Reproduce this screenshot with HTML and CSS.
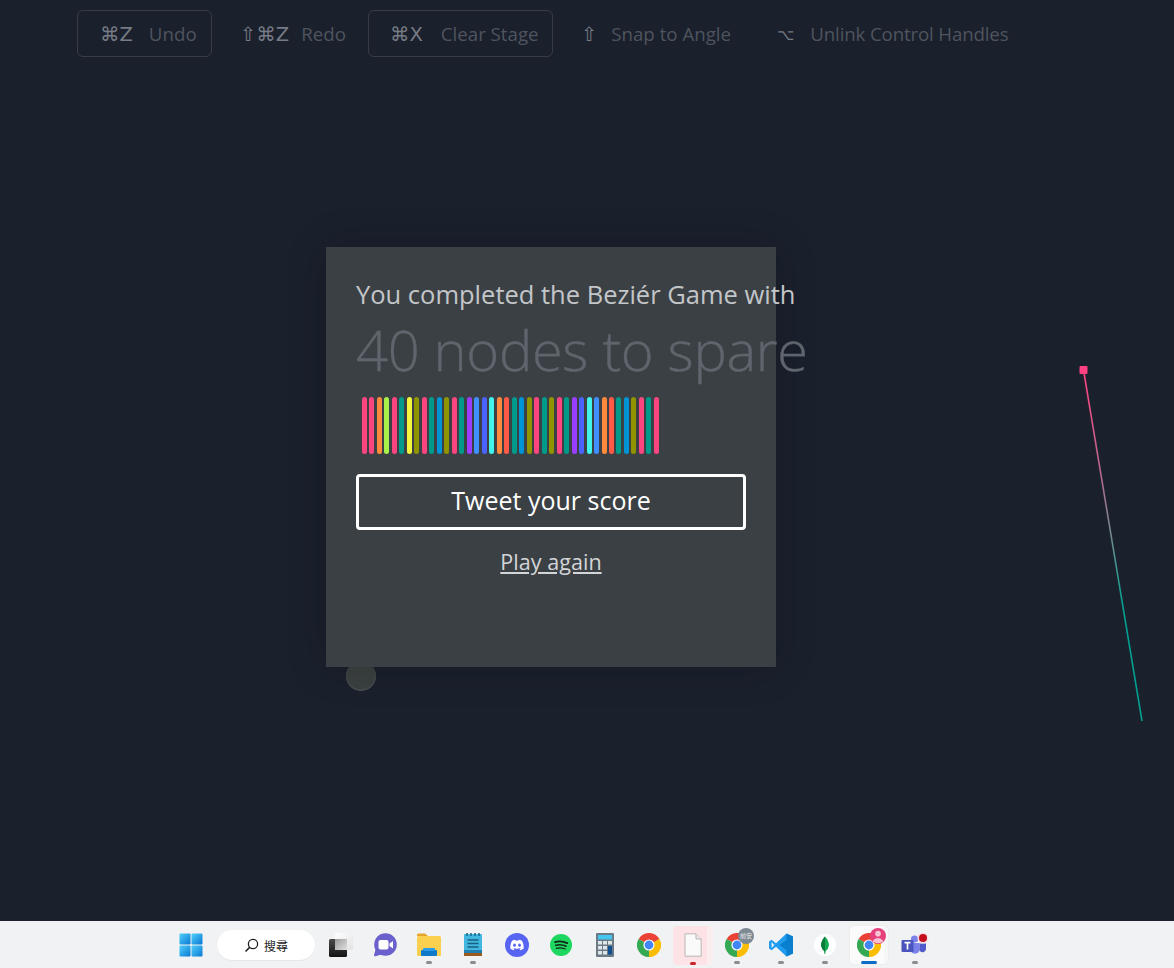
FILE: index.html
```html
<!DOCTYPE html>
<html lang="en">
<head>
    <meta charset="UTF-8">
    <meta name="viewport" content="width=device-width, initial-scale=1.0">
    <title>The Bezier Game</title>
    <link rel="stylesheet" href="styles.css">
</head>
<body>
    <div class="stage">
        <div class="toolbar">
            <div class="tool boxed tool-undo"><span class="keys">⌘Z</span><span class="label">Undo</span></div>
            <div class="tool tool-redo"><span class="keys">⇧⌘Z</span><span class="label">Redo</span></div>
            <div class="tool boxed tool-clear"><span class="keys">⌘X</span><span class="label">Clear Stage</span></div>
            <div class="tool tool-snap"><span class="keys">⇧</span><span class="label">Snap to Angle</span></div>
            <div class="tool tool-unlink"><span class="keys keys-small">⌥</span><span class="label">Unlink Control Handles</span></div>
        </div>

        <svg class="handle" width="80" height="370" viewBox="0 0 80 370">
            <defs>
                <linearGradient id="handleLine" x1="0" y1="0" x2="0" y2="1">
                    <stop offset="0" stop-color="#ff4081"/>
                    <stop offset="0.3" stop-color="#b36a8c"/>
                    <stop offset="0.48" stop-color="#6b8a8a"/>
                    <stop offset="0.68" stop-color="#00a090"/>
                    <stop offset="1" stop-color="#00a090"/>
                </linearGradient>
            </defs>
            <path d="M13.5 10 L72 361" stroke="url(#handleLine)" stroke-width="1.6" fill="none"/>
            <rect x="9.5" y="6" width="8" height="8" rx="1" fill="#ff4081"/>
        </svg>

        <div class="node"></div>

        <div class="modal">
            <p class="modal-lead">You completed the Beziér Game with</p>
            <h1 class="modal-score">40 nodes to spare</h1>
            <div class="bars">
                <span class="pink"></span><span class="pink"></span><span class="orange"></span><span class="lime"></span><span class="pink"></span>
                <span class="teal"></span><span class="yellow"></span><span class="olive"></span><span class="pink"></span><span class="teal"></span>
                <span class="blue"></span><span class="olive"></span><span class="pink"></span><span class="teal"></span><span class="purple"></span>
                <span class="sky"></span><span class="indigo"></span><span class="cyan"></span><span class="orange"></span><span class="red"></span>
                <span class="teal"></span><span class="blue"></span><span class="olive"></span><span class="pink"></span><span class="teal"></span>
                <span class="olive"></span><span class="pink"></span><span class="teal"></span><span class="purple"></span><span class="indigo"></span>
                <span class="cyan"></span><span class="sky"></span><span class="orange"></span><span class="red"></span><span class="teal"></span>
                <span class="blue"></span><span class="olive"></span><span class="pink"></span><span class="teal"></span><span class="pink"></span>
            </div>
            <a class="tweet" href="#">Tweet your score</a>
            <a class="again" href="#">Play again</a>
        </div>
    </div>

    <div class="taskbar">
        <svg class="tb-icon tb-start" width="24" height="24" viewBox="0 0 24 24">
            <defs>
                <linearGradient id="winBlue" x1="0" y1="0" x2="1" y2="1">
                    <stop offset="0" stop-color="#4fd0fb"/>
                    <stop offset="1" stop-color="#0a78d4"/>
                </linearGradient>
                <linearGradient id="viewsBack" x1="0" y1="0" x2="1" y2="1">
                    <stop offset="0" stop-color="#ffffff"/>
                    <stop offset="1" stop-color="#e2e2e2"/>
                </linearGradient>
                <linearGradient id="viewsFront" x1="0" y1="0" x2="0" y2="1">
                    <stop offset="0" stop-color="#4a4a4a"/>
                    <stop offset="1" stop-color="#141414"/>
                </linearGradient>
                <linearGradient id="viewsMid" x1="0" y1="0" x2="1" y2="1">
                    <stop offset="0" stop-color="#9a9a9a"/>
                    <stop offset="1" stop-color="#e0e0e0"/>
                </linearGradient>
            </defs>
            <rect x="0.5" y="0.5" width="11" height="11" rx="1" fill="url(#winBlue)"/>
            <rect x="12.5" y="0.5" width="11" height="11" rx="1" fill="url(#winBlue)"/>
            <rect x="0.5" y="12.5" width="11" height="11" rx="1" fill="url(#winBlue)"/>
            <rect x="12.5" y="12.5" width="11" height="11" rx="1" fill="url(#winBlue)"/>
        </svg>

        <div class="tb-search">
            <svg width="15" height="15" viewBox="0 0 15 15"><circle cx="9" cy="6" r="4.6" fill="none" stroke="#222" stroke-width="1.3"/><path d="M5.6 9.4 L1.5 13.5" stroke="#222" stroke-width="1.5"/></svg>
            <span>搜尋</span>
        </div>

        <svg class="tb-icon tb-views" width="24" height="24" viewBox="0 0 24 24">
            <rect x="6" y="0" width="18" height="17" rx="1.5" fill="url(#viewsBack)"/>
            <rect x="0" y="6" width="18" height="18" rx="1.5" fill="url(#viewsFront)"/>
            <rect x="6" y="6" width="12" height="11" fill="url(#viewsMid)"/>
        </svg>

        <svg class="tb-icon tb-chat" width="24" height="24" viewBox="0 0 24 24">
            <circle cx="12.5" cy="11.5" r="11.3" fill="#6b60cc"/>
            <path d="M3 15 L1 22 Q0.8 23.6 2.5 23.2 L10 21 Z" fill="#6b60cc"/>
            <rect x="5.5" y="7" width="10" height="9.5" rx="2" fill="#fff"/>
            <path d="M16.5 10.6 L20 8 V15.6 L16.5 13 Z" fill="#fff"/>
        </svg>

        <div class="tb-item tb-files">
            <svg width="24" height="24" viewBox="0 0 24 24">
                <path d="M0 2 Q0 0.5 1.5 0.5 H8 L11 3 H0 Z" fill="#e5a52a"/>
                <rect x="0" y="3" width="24" height="20" rx="1.5" fill="#fbd04e"/>
                <rect x="4" y="17" width="16" height="6" rx="1" fill="#0f78c9"/>
                <rect x="6" y="15" width="12" height="3" rx="1" fill="#2a9ce3"/>
            </svg>
            <i class="pip"></i>
        </div>

        <div class="tb-item tb-notes">
            <svg width="18" height="24" viewBox="0 0 18 24">
                <rect x="0" y="1" width="18" height="21" rx="1" fill="#41b7e0"/>
                <rect x="0" y="20" width="18" height="3" fill="#9a5a1e"/>
                <rect x="0" y="17" width="18" height="3" fill="#1f7fae"/>
                <path d="M3 0 V3 M7 0 V3 M11 0 V3 M15 0 V3" stroke="#14668f" stroke-width="1.5"/>
                <path d="M3.5 7 H14.5 M3.5 10.5 H14.5 M3.5 14 H14.5" stroke="#17617f" stroke-width="1.4"/>
            </svg>
            <i class="pip"></i>
        </div>

        <svg class="tb-icon tb-discord" width="24" height="24" viewBox="0 0 24 24">
            <circle cx="12" cy="12" r="12" fill="#5865f2"/>
            <path d="M7 7.8 Q9 6.9 10.2 6.8 L10.7 7.7 Q12 7.5 13.3 7.7 L13.8 6.8 Q15.2 7 17 7.8 Q19 11 18.8 15.6 Q17.2 16.9 15.3 17.3 L14.5 16 L15.7 15.4 L15.3 15 Q12 16.4 8.7 15 L8.3 15.4 L9.5 16 L8.7 17.3 Q6.8 16.9 5.2 15.6 Q5 11 7 7.8 Z" fill="#fff"/>
            <ellipse cx="9.5" cy="12.2" rx="1.4" ry="1.6" fill="#5865f2"/>
            <ellipse cx="14.5" cy="12.2" rx="1.4" ry="1.6" fill="#5865f2"/>
        </svg>

        <svg class="tb-icon tb-spotify" width="22" height="22" viewBox="0 0 24 24">
            <circle cx="12" cy="12" r="12" fill="#1ed760"/>
            <path d="M5.5 8.8 Q12 6.8 18.8 10" stroke="#14241a" stroke-width="2" stroke-linecap="round" fill="none"/>
            <path d="M6.3 12.4 Q12 10.8 17.6 13.4" stroke="#14241a" stroke-width="1.7" stroke-linecap="round" fill="none"/>
            <path d="M7 15.6 Q12 14.4 16.5 16.4" stroke="#14241a" stroke-width="1.4" stroke-linecap="round" fill="none"/>
        </svg>

        <svg class="tb-icon tb-calc" width="18" height="24" viewBox="0 0 18 24">
            <rect x="0" y="0" width="18" height="24" rx="1" fill="#6c7a86"/>
            <rect x="2" y="2" width="14" height="4.5" fill="#45c6ee"/>
            <g fill="#dfe6ea">
                <rect x="2" y="8" width="4" height="3.5"/><rect x="7" y="8" width="4" height="3.5"/><rect x="12" y="8" width="4" height="3.5"/>
                <rect x="2" y="13" width="4" height="3.5"/><rect x="7" y="13" width="4" height="3.5"/>
                <rect x="2" y="18" width="4" height="3.5"/><rect x="7" y="18" width="4" height="3.5"/>
            </g>
            <rect x="12" y="13" width="4" height="8.5" fill="#0f4f8f"/>
        </svg>

        <svg class="tb-icon tb-chrome" width="24" height="24" viewBox="0 0 24 24">
            <g id="chromeLogo">
                <path d="M12 12 L1.6 6 A12 12 0 0 1 22.4 6 Z" fill="#ea4335"/>
                <path d="M12 12 L22.4 6 A12 12 0 0 1 12 24 Z" fill="#fbbc04"/>
                <path d="M12 12 L12 24 A12 12 0 0 1 1.6 6 Z" fill="#34a853"/>
                <circle cx="12" cy="12" r="5.6" fill="#fff"/>
                <circle cx="12" cy="12" r="4.4" fill="#4285f4"/>
            </g>
        </svg>

        <div class="tb-item tb-doc">
            <svg width="18" height="24" viewBox="0 0 18 24">
                <path d="M1 .8 H12 L17.2 6 V23.2 H1 Z" fill="#fafafa" stroke="#b9b4b4" stroke-width="1"/>
                <path d="M12 .8 V6 H17.2" fill="#eeeaea" stroke="#b9b4b4" stroke-width="1"/>
            </svg>
            <i class="pip pip-red"></i>
        </div>

        <div class="tb-item tb-chrome-safe">
            <svg width="24" height="24" viewBox="0 0 24 24"><use href="#chromeLogo"/></svg>
            <span class="tb-badge">前安</span>
            <i class="pip"></i>
        </div>

        <div class="tb-item tb-vscode">
            <svg width="24" height="24" viewBox="0 0 24 24">
                <path d="M17.5 0.5 L24 3.6 V20.4 L17.5 23.5 L7 13.8 L2.6 17.2 L0 15.6 V8.4 L2.6 6.8 L7 10.2 Z" fill="#1f9cf0"/>
                <path d="M17.5 0.5 L24 3.6 V20.4 L17.5 23.5 Z M17.5 7 L10.5 12 L17.5 17 Z" fill="#0a7fcd" fill-rule="evenodd"/>
                <path d="M2.6 9 L5.3 12 L2.6 15 Z" fill="#f3f3f3"/>
            </svg>
            <i class="pip"></i>
        </div>

        <div class="tb-item tb-mongo">
            <svg width="24" height="24" viewBox="0 0 24 24">
                <circle cx="12" cy="12" r="11" fill="#fff"/>
                <path d="M12 3.5 Q16.5 8.5 15.8 13 Q15 17 12.6 18.3 L12.3 21 H11.7 L11.4 18.3 Q9 17 8.2 13 Q7.5 8.5 12 3.5 Z" fill="#13aa52"/>
                <path d="M12 3.5 Q7.5 8.5 8.2 13 Q9 17 11.4 18.3 L11.7 21 H12 Z" fill="#0d7a3a"/>
            </svg>
            <i class="pip"></i>
        </div>

        <div class="tb-item tb-active">
            <svg width="24" height="24" viewBox="0 0 24 24"><use href="#chromeLogo"/></svg>
            <svg class="tb-avatar" width="16" height="16" viewBox="0 0 17 17">
                <circle cx="8.5" cy="8.5" r="8.5" fill="#e5407c"/>
                <circle cx="8.5" cy="6" r="3" fill="#f8c3d3"/>
                <path d="M2.5 14 Q8.5 7.5 14.5 14 Q8.5 18.5 2.5 14 Z" fill="#f8c3d3"/>
            </svg>
            <i class="pip pip-blue"></i>
        </div>

        <div class="tb-item tb-teams">
            <svg width="27" height="24" viewBox="0 0 26 24">
                <circle cx="13" cy="6" r="3.6" fill="#7b83eb"/>
                <circle cx="21" cy="7.5" r="2.6" fill="#5059c9"/>
                <path d="M9 10 H18 V18 A5 5 0 0 1 9 18 Z" fill="#7b83eb"/>
                <path d="M18 10.5 H24.5 V16 A3.5 3.5 0 0 1 18 17.5 Z" fill="#5059c9"/>
                <rect x="0" y="7" width="12" height="12" rx="1" fill="#4b53bc"/>
                <path d="M3 9.6 H9 M6 9.6 V16.6" stroke="#fff" stroke-width="1.7"/>
            </svg>
            <svg class="tb-dot" width="12" height="12" viewBox="0 0 12 12">
                <circle cx="6" cy="6" r="5.5" fill="#f6dfe2"/>
                <circle cx="6" cy="6" r="4" fill="#c50f1f"/>
            </svg>
            <i class="pip"></i>
        </div>
    </div>
</body>
</html>
```

FILE: styles.css
```css
html, body {
    height: 100%;
}
body {
    margin: 0;
    display: flex;
    flex-direction: column;
    overflow: hidden;
    background: #1a202c;
    font-family: "Open Sans", "Noto Sans", Arial, sans-serif;
}

.stage {
    position: relative;
    flex: 1;
}

/* top shortcut hints */
.toolbar {
    display: flex;
    align-items: center;
    padding: 10px 0 0 77px;
    color: #4f545e;
    font-size: 18.7px;
}
.tool {
    display: flex;
    align-items: center;
    height: 47px;
    box-sizing: border-box;
    border: 1px solid transparent;
    border-radius: 6px;
}
.boxed {
    border-color: #373c47;
}
.keys {
    padding-top: 2px;
    color: #777b85;
    font-family: "DejaVu Sans", sans-serif;
    font-size: 19.5px;
    white-space: nowrap;
}
.keys-small {
    font-size: 15px;
}
.label {
    white-space: nowrap;
}
.tool-undo { width: 135px; padding-left: 22px; gap: 16px; }
.tool-redo { margin-left: 27px; gap: 12px; }
.tool-clear { width: 185px; margin-left: 21px; padding-left: 21px; gap: 18px; }
.tool-snap { margin-left: 27px; gap: 14px; }
.tool-unlink { margin-left: 44px; gap: 16px; }
.tool-unlink .label { letter-spacing: -0.15px; }

/* bezier handle on the canvas */
.handle {
    position: absolute;
    left: 1070px;
    top: 360px;
}
.node {
    position: absolute;
    left: 346px;
    top: 661px;
    width: 30px;
    height: 30px;
    border-radius: 50%;
    background: #3a403f;
    box-shadow: inset 0 -1px 2px #50555a;
}

.modal {
    position: absolute;
    left: 326px;
    top: 247px;
    width: 450px;
    height: 420px;
    padding: 30px;
    box-sizing: border-box;
    background: #3b4044;
    box-shadow: 0 0 40px rgba(0, 0, 0, 0.15);
}
.modal-lead {
    margin: 0;
    color: #c3c6c9;
    font-size: 25.5px;
    line-height: 35px;
    white-space: nowrap;
}
.modal-score {
    margin: 6px 0 0;
    color: #5f656d;
    font-size: 56px;
    font-weight: 300;
    letter-spacing: -0.3px;
    line-height: 62px;
    white-space: nowrap;
    -webkit-text-stroke: 0.4px #5f656d;
}
.bars {
    display: flex;
    gap: 2.49px;
    margin: 17px 0 0 6px;
}
.bars span {
    width: 5px;
    height: 57px;
    border-radius: 2.5px;
}
.pink { background: #fb4580; }
.orange { background: #ff8a3d; }
.lime { background: #a8f04a; }
.teal { background: #009a8a; }
.yellow { background: #f4f53f; }
.olive { background: #8f9400; }
.blue { background: #0093d6; }
.purple { background: #9a3dff; }
.sky { background: #3f8fff; }
.indigo { background: #4a62ff; }
.cyan { background: #40f4ec; }
.red { background: #ff5a45; }

.tweet {
    display: block;
    margin-top: 20px;
    height: 56px;
    box-sizing: border-box;
    border: 3px solid #fff;
    border-radius: 4px;
    color: #fff;
    font-size: 25px;
    line-height: 47px;
    text-align: center;
    text-decoration: none;
}
.again {
    display: block;
    margin-top: 17px;
    color: #d3d5d7;
    font-size: 21.6px;
    line-height: 30px;
    text-align: center;
    text-decoration: underline;
}

/* windows taskbar */
.taskbar {
    display: flex;
    align-items: center;
    flex: none;
    height: 47px;
    padding: 1px 0 0 179px;
    background: #f1f2f3;
    box-sizing: border-box;
}
.tb-item {
    position: relative;
    display: flex;
    align-items: center;
    justify-content: center;
    flex: none;
}
.tb-icon {
    flex: none;
}
.tb-search {
    display: flex;
    align-items: center;
    justify-content: center;
    gap: 5px;
    width: 98px;
    height: 30px;
    margin-left: 14px;
    border-radius: 15px;
    background: #fff;
    box-shadow: 0 1px 1px #e4e6e8;
    color: #222;
    font-family: "Noto Sans CJK TC", sans-serif;
    font-size: 12px;
}
.tb-views { margin-left: 14px; }
.tb-chat { margin-left: 20px; }
.tb-files { margin-left: 20px; }
.tb-notes { margin-left: 23px; }
.tb-discord { margin-left: 23px; }
.tb-spotify { margin-left: 21px; }
.tb-calc { margin-left: 24px; }
.tb-chrome { margin-left: 23px; }
.tb-doc {
    width: 40px;
    height: 39px;
    margin-left: 12px;
    border-radius: 4px;
    background: linear-gradient(90deg, #fde3e5 34px, #fbeeef 34px);
}
.tb-chrome-safe { margin-left: 12px; }
.tb-vscode { margin-left: 20px; }
.tb-mongo { margin-left: 20px; }
.tb-active {
    width: 38px;
    height: 38px;
    margin-left: 13px;
    border-radius: 4px;
    background: linear-gradient(90deg, #fbfbfb 34px, #f5f6f7 34px);
    box-shadow: 0 0 1px #c4c4c4;
}
.tb-teams { margin-left: 13px; }

.pip {
    position: absolute;
    left: 50%;
    bottom: -7px;
    width: 6px;
    height: 3px;
    margin-left: -3px;
    border-radius: 2px;
    background: #8a8c8e;
}
.pip-red {
    bottom: 0;
    background: #c8242c;
}
.pip-blue {
    bottom: 0;
    width: 16px;
    margin-left: -8px;
    background: #0a6cc4;
}
.tb-badge {
    position: absolute;
    top: -5px;
    right: -5px;
    width: 16px;
    height: 16px;
    border-radius: 50%;
    background: #7d8a94;
    color: #e8e8e8;
    font-family: "Noto Sans CJK TC", sans-serif;
    font-size: 6px;
    line-height: 16px;
    text-align: center;
}
.tb-avatar {
    position: absolute;
    top: 2px;
    right: 2px;
}
.tb-dot {
    position: absolute;
    top: -1px;
    right: -1px;
}
```
